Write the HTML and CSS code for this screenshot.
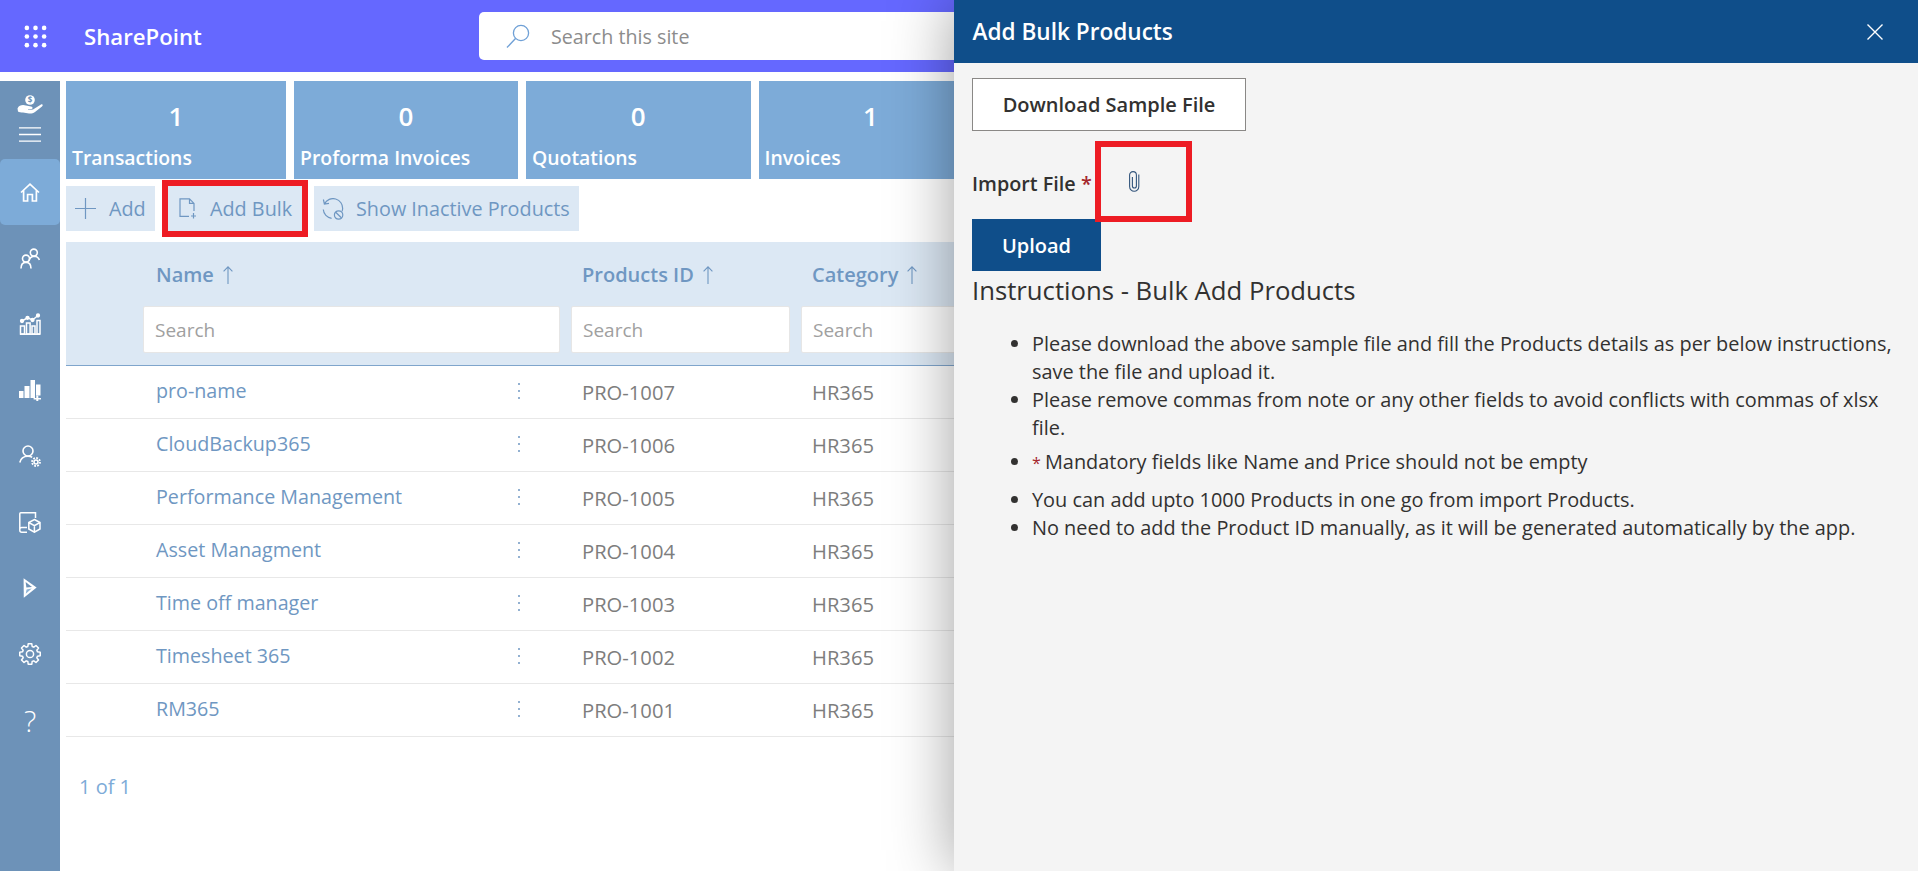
FILE: index.html
```html
<!DOCTYPE html>
<html lang="en">
<head>
<meta charset="utf-8">
<title>Add Bulk Products</title>
<link rel="stylesheet" href="styles.css">
</head>
<body>
<div class="page">
  <header class="topbar">
    <svg class="waffle" viewBox="0 0 24 24" width="24" height="24"><g fill="#fff"><circle cx="3" cy="3" r="2.4"/><circle cx="12" cy="3" r="2.4"/><circle cx="21" cy="3" r="2.4"/><circle cx="3" cy="12" r="2.4"/><circle cx="12" cy="12" r="2.4"/><circle cx="21" cy="12" r="2.4"/><circle cx="3" cy="21" r="2.4"/><circle cx="12" cy="21" r="2.4"/><circle cx="21" cy="21" r="2.4"/></g></svg>
    <div class="brand">SharePoint</div>
    <div class="sitesearch">
      <svg class="sitesearch-icon" viewBox="0 0 24 24" width="24" height="24" fill="none" stroke="#6fa0d6" stroke-width="1.3"><circle cx="15" cy="9" r="7.6"/><path d="M9.5 14.5 L1 23.5"/></svg>
      <span class="sitesearch-text">Search this site</span>
    </div>
  </header>

  <div class="workspace">
    <nav class="rail">
      <div class="rail-top">
        <svg class="rail-hand" viewBox="0 0 26 19" width="26" height="19"><circle cx="13" cy="5" r="4.8" fill="#fff"/><text x="13" y="8" text-anchor="middle" class="rail-dollar">$</text><path d="M0.5 13.5 C2 10 6 9.6 9 10.6 L14 11.6 C16 12 16 13.6 14.4 14 L11 14.4 L11 15 L16 14.4 L24 9.4 C25.6 8.6 26.4 10 25 11.4 L18 17 C16 18.4 14 18.6 12 18.4 L6 17.6 C4 17.4 2 17.6 1 16.6 Z" fill="#fff"/></svg>
        <svg class="rail-menu" viewBox="0 0 22 15" width="22" height="15" stroke="#fff" stroke-width="1.3"><path d="M0 .8H22M0 7.5H22M0 14.2H22"/></svg>
      </div>
      <div class="rail-item rail-active"><svg viewBox="0 0 20 19" width="20" height="19" fill="none" stroke="#fff" stroke-width="1.7"><path d="M1 9.5 L10 1.2 L19 9.5 M3.6 7.5 V18 H7.6 V11.5 H12.4 V18 H16.4 V7.5"/></svg></div>
      <div class="rail-item"><svg viewBox="0 0 20 21" width="20" height="21" fill="none" stroke="#fff" stroke-width="1.6"><circle cx="13.8" cy="4.6" r="3.5"/><path d="M9 13 C9.6 9.4 12 8.4 14 8.2 C17 8.2 18.6 10 19.4 12"/><circle cx="6" cy="10.6" r="3.5"/><path d="M1 20.5 C1 16.6 3 14.4 6 14.4 C9 14.4 11 16.6 11 20.5"/></svg></div>
      <div class="rail-item"><svg viewBox="0 0 22 22" width="22" height="22" fill="none" stroke="#fff" stroke-width="1.5"><path d="M1 21.2H21"/><rect x="1.5" y="13" width="4" height="8"/><rect x="7.5" y="10" width="3.6" height="11"/><rect x="13" y="13" width="3" height="8"/><rect x="18" y="7.5" width="3" height="13.5"/><path d="M3 8 L8.5 4.8 L13.5 7 L19 2.5"/><g fill="#fff"><circle cx="3" cy="8" r="1.4"/><circle cx="8.5" cy="4.8" r="1.4"/><circle cx="13.5" cy="7" r="1.4"/><circle cx="19" cy="2.5" r="1.4"/></g></svg></div>
      <div class="rail-item"><svg viewBox="0 0 22 21" width="22" height="21" fill="#fff"><rect x="0" y="11" width="4.5" height="7"/><rect x="5.5" y="6" width="5" height="12"/><rect x="11.5" y="0" width="4.5" height="18"/><rect x="17" y="4.5" width="4.5" height="11"/><path d="M17.3 15.5h2v2.5h2.7v1.6h-2.7v1.4h-2v-1.4h-2.7v-1.6h2.7z"/></svg></div>
      <div class="rail-item"><svg viewBox="0 0 22 22" width="22" height="22" fill="none" stroke="#fff" stroke-width="1.6"><circle cx="9" cy="6" r="5"/><path d="M.8 17.5 C1.6 13.5 4.8 11.2 9 11.2 C10.6 11.2 12 11.6 13.2 12.2"/><circle cx="17" cy="17" r="2"/><circle cx="17" cy="17" r="4" stroke-width="1.8" stroke-dasharray="1.8 1.3"/></svg></div>
      <div class="rail-item"><svg viewBox="0 0 22 21" width="22" height="21" fill="none" stroke="#fff" stroke-width="1.5"><path d="M8 20.2H2.8C1.6 20.2 .8 19.4 .8 18.2V1.8C.8 1.2 1.2 .8 1.8 .8H16.5V6M.8 17C.8 16 1.6 15.6 2.8 15.6H8"/><path d="M15.4 7.5 L21 10.5 V17 L15.4 20.2 L9.8 17 V10.5 Z M9.8 10.5 L15.4 13.6 L21 10.5 M15.4 13.6 V20.2"/></svg></div>
      <div class="rail-item"><svg viewBox="0 0 14 20" width="14" height="20"><path d="M.6 .3 L13.6 9.4 L.8 19.7 Z" fill="#fff"/><path d="M2.6 4 L9 9 L3.4 9.6 Z" fill="#6d92b8"/><path d="M3.6 11.4 L8.8 10.6 L2.7 15.8 Z" fill="#8fb4d6"/></svg></div>
      <div class="rail-item"><svg viewBox="0 0 22 22" width="22" height="22" fill="none" stroke="#fff" stroke-width="1.5" stroke-linejoin="round"><circle cx="11" cy="11" r="3.6"/><path d="M9.19 .76L12.81 .76L13.15 3.5L14.78 4.18L16.97 2.48L19.52 5.03L17.82 7.22L18.5 8.85L21.24 9.19L21.24 12.81L18.5 13.15L17.82 14.78L19.52 16.97L16.97 19.52L14.78 17.82L13.15 18.5L12.81 21.24L9.19 21.24L8.85 18.5L7.22 17.82L5.03 19.52L2.48 16.97L4.18 14.78L3.5 13.15L.76 12.81L.76 9.19L3.5 8.85L4.18 7.22L2.48 5.03L5.03 2.48L7.22 4.18L8.85 3.5Z"/></svg></div>
      <div class="rail-item rail-help">?</div>
    </nav>

    <main class="content">
      <section class="tiles">
        <div class="tile"><div class="tile-num">1</div><div class="tile-label">Transactions</div></div>
        <div class="tile"><div class="tile-num">0</div><div class="tile-label">Proforma Invoices</div></div>
        <div class="tile"><div class="tile-num">0</div><div class="tile-label">Quotations</div></div>
        <div class="tile"><div class="tile-num">1</div><div class="tile-label">Invoices</div></div>
      </section>

      <section class="toolbar">
        <div class="tool tool-add">
          <svg viewBox="0 0 21 21" width="21" height="21" stroke="#6f97c2" stroke-width="1.2"><path d="M10.5 0V21M0 10.5H21"/></svg>
          <span>Add</span>
        </div>
        <div class="tool tool-bulk">
          <svg viewBox="0 0 18 21" width="18" height="21" fill="none" stroke="#6f97c2" stroke-width="1.2"><path d="M10 18.4H1V.8H10.5L15 5.4V13M10.5 .8V5.4H15M14.5 15V20.5M12 18H17"/></svg>
          <span>Add Bulk</span>
        </div>
        <div class="tool tool-inactive">
          <svg viewBox="0 0 22 22" width="22" height="22" fill="none" stroke="#6f97c2" stroke-width="1.2"><path d="M2.5 5.8 A9.6 9.6 0 0 1 20.6 11 A9 9 0 0 1 20 13.4M1.4 1.5 L2.4 6 L7 5.4M1.3 11.5 A9.6 9.6 0 0 0 9.6 20.4"/><circle cx="16.6" cy="17" r="4.2"/><path d="M13.7 14.2 L19.6 20"/></svg>
          <span>Show Inactive Products</span>
        </div>
      </section>

      <section class="grid-head">
        <div class="cell-empty"></div>
        <div class="head-label head-name">Name <svg class="sort" viewBox="0 0 10 18" width="10" height="18" fill="none" stroke="#6f97c2" stroke-width="1.1"><path d="M5 18V.8M.6 5.4L5 .8L9.4 5.4"/></svg></div>
        <div class="head-label">Products ID <svg class="sort" viewBox="0 0 10 18" width="10" height="18" fill="none" stroke="#6f97c2" stroke-width="1.1"><path d="M5 18V.8M.6 5.4L5 .8L9.4 5.4"/></svg></div>
        <div class="head-label">Category <svg class="sort" viewBox="0 0 10 18" width="10" height="18" fill="none" stroke="#6f97c2" stroke-width="1.1"><path d="M5 18V.8M.6 5.4L5 .8L9.4 5.4"/></svg></div>
        <div class="cell-empty"></div>
        <input class="filter" placeholder="Search">
        <input class="filter" placeholder="Search">
        <input class="filter" placeholder="Search">
      </section>

      <section class="rows">
        <div class="row"><div></div><div class="name-cell"><span class="name">pro-name</span><span class="dots"></span></div><div class="val">PRO-1007</div><div class="val">HR365</div></div>
        <div class="row"><div></div><div class="name-cell"><span class="name">CloudBackup365</span><span class="dots"></span></div><div class="val">PRO-1006</div><div class="val">HR365</div></div>
        <div class="row"><div></div><div class="name-cell"><span class="name">Performance Management</span><span class="dots"></span></div><div class="val">PRO-1005</div><div class="val">HR365</div></div>
        <div class="row"><div></div><div class="name-cell"><span class="name">Asset Managment</span><span class="dots"></span></div><div class="val">PRO-1004</div><div class="val">HR365</div></div>
        <div class="row"><div></div><div class="name-cell"><span class="name">Time off manager</span><span class="dots"></span></div><div class="val">PRO-1003</div><div class="val">HR365</div></div>
        <div class="row"><div></div><div class="name-cell"><span class="name">Timesheet 365</span><span class="dots"></span></div><div class="val">PRO-1002</div><div class="val">HR365</div></div>
        <div class="row"><div></div><div class="name-cell"><span class="name">RM365</span><span class="dots"></span></div><div class="val">PRO-1001</div><div class="val">HR365</div></div>
      </section>

      <div class="pager">1 of 1</div>
    </main>
  </div>

  <aside class="panel">
    <div class="panel-head">
      <div class="panel-title">Add Bulk Products</div>
      <svg viewBox="0 0 16 16" width="16" height="16" stroke="#fff" stroke-width="1.4"><path d="M.5 .5L15.5 15.5M15.5 .5L.5 15.5"/></svg>
    </div>
    <div class="panel-body">
      <div class="btn-sample">Download Sample File</div>
      <div class="import-row">
        <span class="import-label">Import File <span class="req">*</span></span>
        <div class="import-mark">
          <svg viewBox="0 0 11 21" width="11" height="21" fill="none" stroke="#33557c" stroke-width="1.1"><path d="M9.8 3.5V15.5A4.6 4.8 0 0 1 .6 15.5V4A3.4 3.4 0 0 1 7.4 4V15A2 2 0 0 1 3.4 15V6"/></svg>
        </div>
      </div>
      <div class="btn-upload">Upload</div>
      <h2 class="instr-title">Instructions - Bulk Add Products</h2>
      <ul class="instr">
        <li>Please download the above sample file and fill the Products details as per below instructions, save the file and upload it.</li>
        <li>Please remove commas from note or any other fields to avoid conflicts with commas of xlsx file.</li>
        <li class="instr-mandatory"><span class="req req-small">*</span> Mandatory fields like Name and Price should not be empty</li>
        <li>You can add upto 1000 Products in one go from import Products.</li>
        <li>No need to add the Product ID manually, as it will be generated automatically by the app.</li>
      </ul>
    </div>
  </aside>
</div>
</body>
</html>
```

FILE: styles.css
```css
* { box-sizing: border-box; }
html, body { margin: 0; padding: 0; background: #fff; }
body { font-family: "Open Sans", "Noto Sans", sans-serif; color: #323130; }
.page { position: relative; width: 1918px; height: 871px; overflow: hidden; display: flex; flex-direction: column; }

.topbar { height: 72px; flex: none; background: #6568ff; display: flex; align-items: center; padding-left: 24px; }
.waffle { flex: none; width: 23px; height: 23px; margin-right: 37px; }
.brand { color: #fff; font-size: 22.2px; font-weight: 600; width: 395px; flex: none; padding-top: 1px; }
.sitesearch { width: 960px; height: 48px; flex: none; background: #fff; border-radius: 5px; display: flex; align-items: center; padding-left: 27px; }
.sitesearch-icon { flex: none; margin-right: 21px; }
.sitesearch-text { font-size: 19.7px; color: #8c8c8c; }

.workspace { flex: 1; display: flex; margin-top: 9px; min-height: 0; }
.rail { width: 60px; flex: none; background: #6d92b8; display: flex; flex-direction: column; }
.rail-top { height: 78px; display: flex; flex-direction: column; align-items: center; padding-top: 14px; gap: 13px; flex: none; }
.rail-dollar { font-size: 8px; font-weight: 700; fill: #6d92b8; font-family: "Open Sans", sans-serif; }
.rail-item { height: 66px; flex: none; display: flex; align-items: center; justify-content: center; }
.rail-active { background: #7dabd8; border-radius: 5px; }
.rail-help { color: #fff; font-size: 29px; font-weight: 300; }

.content { flex: 1; margin-left: 6px; min-width: 0; }
.tiles { display: grid; grid-template-columns: 220px 224px 224.5px 224px; column-gap: 8px; }
.tile { height: 98px; background: #7dabd8; color: #fff; padding: 18px 6px 0; }
.tile-num { text-align: center; font-size: 26px; font-weight: 600; line-height: 34px; }
.tile-label { margin-top: 12px; font-size: 19.4px; font-weight: 600; line-height: 26px; }

.toolbar { display: flex; margin-top: 7px; height: 45px; }
.tool { height: 45px; background: #dce8f4; color: #6f97c2; font-size: 19.8px; display: flex; align-items: center; flex: none; }
.tool-add { width: 89px; padding-left: 9px; gap: 13px; }
.tool-bulk { width: 134px; margin-left: 13px; padding-left: 11px; gap: 13px; outline: 6px solid #ed1c24; }
.tool-inactive { width: 265px; margin-left: 12px; padding-left: 8px; gap: 12px; }

.grid-head, .row { display: grid; grid-template-columns: 66px 417px 219px 229px; column-gap: 11px; }
.grid-head { margin-top: 11px; height: 124px; background: #dce8f4; border-bottom: 1px solid #7fa5cc; grid-template-rows: 64px 47px; }
.head-label { padding-left: 11px; display: flex; align-items: center; gap: 9px; color: #6f97c2; font-size: 20px; font-weight: 600; padding-top: 1px; }
.head-name { padding-left: 13px; }
.filter { height: 47px; border: 1px solid #e6e6e6; border-radius: 2px; background: #fff; padding: 0 0 0 11px; font: 19px "Open Sans", sans-serif; color: #333; outline: none; width: 100%; }
.filter::placeholder { color: #a0a0a0; opacity: 1; }

.row { height: 53px; border-bottom: 1px solid #e8e8e8; align-items: center; }
.name-cell { display: flex; justify-content: space-between; align-items: center; padding: 0 40px 3px 13px; }
.name { color: #6f97c2; font-size: 19.7px; }
.dots { width: 2px; height: 2px; background: #6f97c2; border-radius: 50%; box-shadow: 0 -7px 0 #6f97c2, 0 7px 0 #6f97c2; }
.val { color: #7d7d7d; font-size: 20.2px; padding-left: 11px; }

.pager { margin-top: 36px; padding-left: 13px; color: #7dabd8; font-size: 20px; line-height: 28px; }

.panel { position: absolute; top: 0; right: 0; bottom: 0; width: 964px; background: #f4f4f4; box-shadow: 0 0 60px rgba(0,0,0,.38); display: flex; flex-direction: column; }
.panel-head { height: 63px; flex: none; background: #0f4e8a; color: #fff; display: flex; align-items: center; justify-content: space-between; padding: 0 35px 0 18.5px; }
.panel-title { font-size: 22.6px; font-weight: 600; }
.panel-body { padding: 15px 0 0 18px; }
.btn-sample { width: 274px; height: 53px; background: #fff; border: 1px solid #8a8886; display: flex; align-items: center; justify-content: center; font-size: 20px; font-weight: 600; color: #323130; padding-bottom: 1px; }
.import-row { height: 88px; display: flex; align-items: center; padding-top: 16px; font-size: 19.8px; font-weight: 600; position: relative; }
.req { color: #a4262c; }
.import-mark { position: absolute; left: 123px; top: 10px; width: 97px; height: 81px; border: 6px solid #ed1c24; padding: 24px 0 0 28px; }
.import-mark svg { display: block; }
.btn-upload { width: 129px; height: 52px; background: #0f4e8a; color: #fff; font-size: 20px; font-weight: 600; display: flex; align-items: center; justify-content: center; }
.instr-title { margin: 2px 0 0; font-size: 25.7px; font-weight: 400; line-height: 36px; color: #323130; }
.instr { margin: 21px 0 0; padding: 0 16px 0 60px; font-size: 19.9px; line-height: 28px; color: #323130; }
.instr-mandatory { margin: 6px 0 9px; }
.req-small { font-size: 16px; margin-right: -1px; }
```
